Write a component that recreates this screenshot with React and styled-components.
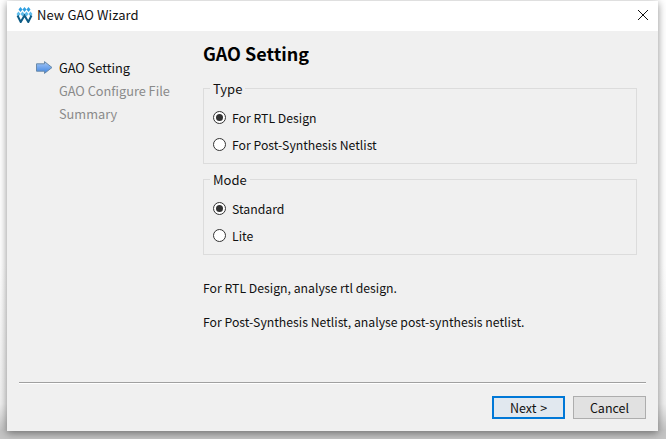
import styled, { createGlobalStyle } from "styled-components";

const GlobalStyle = createGlobalStyle`
  html, body {
    margin: 0;
    padding: 0;
    background: #ffffff;
    overflow: hidden;
  }
  body {
    font-family: "Noto Sans CJK SC", "Noto Sans", sans-serif;
    font-size: 13px;
    color: #111;
  }
`;

const Page = styled.div`
  width: 666px;
  height: 439px;
  padding: 1px 8px 8px 7px;
  box-sizing: border-box;
  background: linear-gradient(to bottom, #fff 0, #fff 60%, #f0f0f0 92%, #c4c4c4 98%, #c4c4c4 100%);
`;

const Window = styled.div`
  width: 651px;
  height: 430px;
  background: #f0f0f0;
  display: flex;
  flex-direction: column;
  box-shadow: 0 2px 8px rgba(0, 0, 0, 0.45);
`;

const TitleBar = styled.div`
  height: 30px;
  flex: none;
  box-sizing: border-box;
  background: #fff;
  display: flex;
  align-items: center;
  padding: 0 9px 2px 9px;
  gap: 4px;
`;

const WindowTitle = styled.span`
  flex: 1;
  font-size: 13px;
  line-height: 28px;
  letter-spacing: 0.1px;
`;

const CloseButton = styled.button`
  border: 0;
  padding: 0;
  background: none;
  width: 12px;
  height: 12px;
  display: flex;
`;

const Body = styled.div`
  flex: 1;
  display: flex;
  min-height: 0;
`;

const StepList = styled.div`
  width: 196px;
  flex: none;
  padding: 25px 0 0 29px;
  box-sizing: border-box;
  display: flex;
  flex-direction: column;
`;

const Step = styled.div`
  display: flex;
  align-items: center;
  height: 23px;
  gap: 6px;
  font-size: 12.75px;
  color: ${({ $active }) => ($active ? "#111" : "#8a8a8a")};
`;

const StepMarker = styled.span`
  width: 17px;
  height: 14px;
  flex: none;
  display: flex;
`;

const Content = styled.div`
  flex: 1;
  padding: 9px 21px 0 0;
  display: flex;
  flex-direction: column;
`;

const Heading = styled.h1`
  margin: 0 0 6px;
  font-size: 18px;
  line-height: 27px;
  font-weight: 700;
  color: #000;
`;

const Group = styled.fieldset`
  margin: 7px 0 0;
  padding: 7px 0 0;
  height: 84px;
  box-sizing: border-box;
  border: 1px solid #dcdcdc;
  min-inline-size: auto;
`;

const GroupLabel = styled.legend`
  margin-left: 6px;
  padding: 0 3px;
  font-size: 13px;
  line-height: 17px;
`;

const RadioRow = styled.label`
  display: flex;
  align-items: center;
  height: 27px;
  gap: 6px;
  padding-left: 9px;
  font-size: 12.25px;
`;

const RadioDot = styled.span`
  width: 13px;
  height: 13px;
  box-sizing: border-box;
  border: 1px solid #333;
  border-radius: 50%;
  background: #fff;
  display: flex;
  align-items: center;
  justify-content: center;
  &::after {
    content: "";
    width: 7px;
    height: 7px;
    border-radius: 50%;
    background: #333;
    display: ${({ $checked }) => ($checked ? "block" : "none")};
  }
`;

const Note = styled.p`
  margin: ${({ $first }) => ($first ? "24px" : "16px")} 0 0;
  font-size: 12.25px;
  line-height: 18px;
`;

const Footer = styled.div`
  flex: none;
  margin: 0 12px;
  border-top: 1px solid #a0a0a0;
  box-shadow: inset 0 1px 0 #fff;
  height: 35px;
  display: flex;
  justify-content: flex-end;
  align-items: flex-start;
  padding-top: 13px;
  gap: 8px;
`;

const FooterButton = styled.button`
  width: 73px;
  height: 23px;
  box-sizing: border-box;
  padding: 0;
  font: inherit;
  font-size: 12.5px;
  word-spacing: 1px;
  color: #111;
  background: ${({ $primary }) => ($primary ? "#e1e8ef" : "#e1e1e1")};
  border: ${({ $primary }) => ($primary ? "2px solid #0078d7" : "1px solid #adadad")};
`;

const Logo = () => (
  <svg width="17" height="16" viewBox="0 0 17 16">
    <path d="M4.500 0l2 2.500-2 2.500-2-2.500zM8.500 0l2 2.500-2 2.500-2-2.500zM12.500 0l2 2.500-2 2.500-2-2.500z" fill="#2f9fe0" />
    <path d="M2.500 4.500l2 2.500-2 2.500-2-2.500zM6.500 4.500l2 2.500-2 2.500-2-2.500zM10.500 4.500l2 2.500-2 2.500-2-2.500zM14.500 4.500l2 2.500-2 2.500-2-2.500z" fill="#5cbcec" />
    <path d="M1.500 8.500l3.200 6.500 3.800-6.500 3.800 6.500 3.200-6.500" fill="none" stroke="#0d5c86" strokeWidth="2" />
  </svg>
);

const CloseIcon = () => (
  <svg width="12" height="12" viewBox="0 0 12 12">
    <path d="M1 1l10 10M11 1L1 11" stroke="#111" strokeWidth="1" fill="none" />
  </svg>
);

const ArrowIcon = () => (
  <svg width="17" height="14" viewBox="0 0 17 14">
    <defs>
      <linearGradient id="arrowFill" x1="0" y1="0" x2="0" y2="1">
        <stop offset="0" stopColor="#a6c8f8" />
        <stop offset="1" stopColor="#3f84e0" />
      </linearGradient>
    </defs>
    <path d="M.5 2.800h8V.6L16 6.500l-7.500 5.900v-2.200H.5z" fill="url(#arrowFill)" stroke="#6a8aa8" strokeWidth="1" />
  </svg>
);

const steps = ["GAO Setting", "GAO Configure File", "Summary"];

const groups = [
  { title: "Type", options: [["For RTL Design", true], ["For Post-Synthesis Netlist", false]] },
  { title: "Mode", options: [["Standard", true], ["Lite", false]] },
];

export default function App() {
  return (
    <Page>
      <GlobalStyle />
      <Window>
        <TitleBar>
          <Logo />
          <WindowTitle>New GAO Wizard</WindowTitle>
          <CloseButton>
            <CloseIcon />
          </CloseButton>
        </TitleBar>
        <Body>
          <StepList>
            {steps.map((step, i) => (
              <Step key={step} $active={i === 0}>
                <StepMarker>{i === 0 && <ArrowIcon />}</StepMarker>
                {step}
              </Step>
            ))}
          </StepList>
          <Content>
            <Heading>GAO Setting</Heading>
            {groups.map((group) => (
              <Group key={group.title}>
                <GroupLabel>{group.title}</GroupLabel>
                {group.options.map(([label, checked]) => (
                  <RadioRow key={label}>
                    <RadioDot $checked={checked} />
                    {label}
                  </RadioRow>
                ))}
              </Group>
            ))}
            <Note $first>For RTL Design, analyse rtl design.</Note>
            <Note>For Post-Synthesis Netlist, analyse post-synthesis netlist.</Note>
          </Content>
        </Body>
        <Footer>
          <FooterButton $primary>Next &gt;</FooterButton>
          <FooterButton>Cancel</FooterButton>
        </Footer>
      </Window>
    </Page>
  );
}
